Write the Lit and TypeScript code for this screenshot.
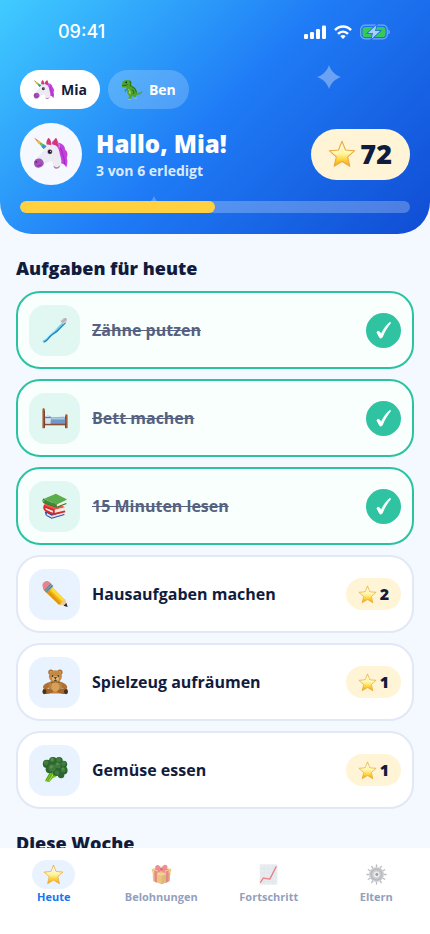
import { LitElement, html, css, svg, nothing } from "lit";
import { customElement, property, state } from "lit/decorators.js";
import { classMap } from "lit/directives/class-map.js";
import { styleMap } from "lit/directives/style-map.js";

const pictures = {
  unicorn: svg`
    <path d="M35 9c4-3 9-1 10 3 7 1 12 6 12 12 5 4 5 10 3 15 2 5 1 12-1 17-2-4-4-6-8-7l-12-8-8-22z" fill="#c63fdc"/>
    <path d="M43 15c6 5 9 10 9 17 4 6 4 12 4 18" fill="none" stroke="#9a2bbd" stroke-width="1.800"/>
    <path d="M38 8c6 2 9 7 9 13" fill="none" stroke="#e672ea" stroke-width="2.500"/>
    <path d="M24 17c7-4 15-3 19 2 4 5 4 12 6 18 1 5 3 9 0 14-3 6-11 7-13 2-1-4 0-7-3-8-5 0-8 3-13 4-3 4-9 9-14 7-5-2-5-10-2-14 5-7 13-10 20-25z" fill="#ecebf4"/>
    <path d="M4 42c5-3 10-3 13 1 2 3 3 6 1 9-3 4-9 6-13 3-4-3-4-9-1-13z" fill="#a350b8"/>
    <path d="M37 53c3 4 9 3 12-2-1 6-5 8-9 7-3-1-4-3-3-5z" fill="#b184a8"/>
    <path d="M24 15c-1-5 1-9 4-12 4 4 5 8 4 13zM36 15c0-6 2-10 5-12 3 4 4 9 2 14z" fill="#d33b70"/>
    <path d="m2 3 22 15-5 5z" fill="#5fc45c"/>
    <path d="m2 3 8 5.500-2 2z" fill="#f2786b"/><path d="m9 8 5 3-3 4-4-5z" fill="#f5b73c"/><path d="m19 14.500 5 3.500-5 5-4-4z" fill="#3d8fd6"/>
    <circle cx="30" cy="28" r="4.500" fill="#bb79c6"/><circle cx="30" cy="28" r="3.400" fill="#151923"/><circle cx="31" cy="27" r="1" fill="#fff"/>
    <circle cx="6" cy="46" r="1.600" fill="#5b226c"/><path d="M8 53c3 0 5-1 7-3" fill="none" stroke="#6d2f7c" stroke-width="1.500"/>`,
  dino: svg`
    <path d="M3 16C2 8 10 3 17 3c7-1 13 3 13 9 0 3-1 5-2 8 9 2 17 10 19 20 5 2 11-2 15-6 0 8-7 13-15 12l-4 4 2 5h-7l-3-7-4 3-2 8h-8l3-10c-5-5-7-11-6-18-2-2-3-4-3-7l-10 1c-3-1-3-6-2-9z" fill="#4fa22c"/>
    <path d="M20 28c-1 8 3 13 8 17 2-9-1-15-8-17z" fill="#a5cf55"/>
    <path d="M25 5c6 4 4 9 2 14 10 4 17 11 18 21M31 31c6 1 8 7 4 13" fill="none" stroke="#27731b" stroke-width="3"/>
    <path d="M4 19c5 0 10 0 15-3" stroke="#1e5e16" stroke-width="2.500" fill="none"/>
    <path d="m19 30-7 3 1 4M24 33l-4 4" fill="none" stroke="#3a8c23" stroke-width="3"/>
    <circle cx="15" cy="10" r="2.400" fill="#17210c"/><path d="M21 59h8M38 55h8" stroke="#d6dfa2" stroke-width="2"/>`,
  star: svg`
    <defs><linearGradient id="gold" x1="0" y1="0" x2="0" y2="1"><stop offset="0" stop-color="#fff0b8"/><stop offset=".5" stop-color="#fff6a2"/><stop offset=".72" stop-color="#ffd641"/><stop offset="1" stop-color="#f2a10f"/></linearGradient></defs>
    <path d="m32 3 8 20 21 1.500-16 14 5 21.500L32 49 14 60l5-21.500L3 24.500 24 23z" fill="url(#gold)" stroke="#eda844" stroke-width="2.400" stroke-linejoin="round"/>
    <path d="m32 11-5 15-13 2M32 11l5 15 13 2" fill="none" stroke="#fffbe3" stroke-width="2"/>`,
  toothbrush: svg`
    <path d="M5 60c6-1 8-9 15-15 8-7 14-8 20-16l16-17" fill="none" stroke="#78cfe9" stroke-width="7" stroke-linecap="round"/>
    <path d="M6 61c7-2 9-9 16-15 8-7 14-8 20-16l15-15" fill="none" stroke="#1b80bd" stroke-width="3" stroke-linecap="round"/>
    <path d="M8 54 18 43l14-12" fill="none" stroke="#d5f5fb" stroke-width="3"/>
    <path d="m45 9 9-7 7 2 1 6-10 8z" fill="#d4d0d2"/><path d="m47 12 12-9M50 14l11-9" stroke="#9a8e94" stroke-width="1.800"/>`,
  bed: svg`
    <path d="M6 42h52v8H6z" fill="#8d4e32"/>
    <path d="M1 11c0-4 6-4 6 0v46H1zM57 26c0-4 6-4 6 0v31h-6z" fill="#a45e3d"/>
    <path d="M6 14v42M58 28v28" stroke="#673422" stroke-width="2"/>
    <path d="M8 28c4-3 12-2 15 2l32-1c3 5 3 12 2 17H8z" fill="#7099c8"/>
    <path d="M8 29c5-4 12-2 14 3l-1 14H8z" fill="#d4e2ef"/><path d="M23 33h33" stroke="#abc9e6" stroke-width="5"/><path d="M8 31h13" stroke="#414f62" stroke-width="2"/>`,
  books: svg`
    <path d="m7 46 33-4 15 9-31 11-15-7z" fill="#304f9f"/><path d="m12 49 12 7 30-9v7l-30 8-13-6z" fill="#e3e4ee"/><path d="m11 55 13 7 31-9" fill="none" stroke="#304f9f" stroke-width="2.500"/>
    <path d="m5 26 30-2 22 11-28 7-20-7z" fill="#ef5548"/><path d="m9 34 19 9 29-8v10l-30 7-17-8z" fill="#f1e8e6"/><path d="M7 30c-3 6-1 11 3 14l18 8 29-7M8 34l21 8v10" fill="none" stroke="#d3292b" stroke-width="4.500"/>
    <path d="M5 14 34 2l28 14-26 13z" fill="#5aad4a"/><path d="m36 29 26-12-3 9-22 9z" fill="#f1f2e6"/><path d="M5 14c-4 4-3 8 0 10l31 11 24-9" fill="none" stroke="#28752d" stroke-width="2.500"/><path d="m5 15 31 14v6L5 24z" fill="#3a8a36"/>`,
  pencil: svg`
    <path d="m16 9 41 38-11 13L4 22z" fill="#f4b511"/><path d="m19 8 37 37-5 6-38-36z" fill="#ffd83a"/><path d="m6 24 36 35 5-4-36-37z" fill="#dd9a0c"/>
    <path d="M57 44l6 19-20-5z" fill="#edc897"/><path d="m60 54 3 10-10-3z" fill="#182d40"/>
    <path d="M2 19 18 2l10 11L13 30z" fill="#829cac"/><path d="M6 23 22 7M9 27 26 11" stroke="#465d6c" stroke-width="1.500"/>
    <path d="M3 17C-3 9 6-3 16 1l5 5L6 22z" fill="#e8838a"/>`,
  bear: svg`
    <circle cx="22" cy="8" r="6.500" fill="#a96d2f"/><circle cx="44" cy="8" r="6.500" fill="#a96d2f"/><circle cx="22" cy="8" r="3" fill="#dca75c"/><circle cx="44" cy="8" r="3" fill="#dca75c"/>
    <path d="M22 31C9 35 1 40 3 47c4 5 14 0 19-6zM43 31c11 3 20 8 19 16-3 5-14 0-20-6z" fill="#ae7131"/>
    <path d="M21 31c7-5 18-5 24 0 6 9 5 25-1 29H22c-7-5-7-22-1-29z" fill="#bd8140"/>
    <ellipse cx="33" cy="44" rx="10" ry="12" fill="#d6a157"/><ellipse cx="33" cy="18" rx="16" ry="15" fill="#c38a45"/><ellipse cx="33" cy="24" rx="8" ry="6" fill="#e5bd7c"/>
    <circle cx="26" cy="17" r="1.900" fill="#24170f"/><circle cx="40" cy="17" r="1.900" fill="#24170f"/><path d="M30 21h6l-3 3zM33 23v4m-4 0c3 3 5 2 8 0" fill="#38200f" stroke="#38200f" stroke-width="1.300"/>
    <path d="M3 49c6-4 20 0 25 6-4 7-22 9-25 3zM62 49c-6-4-20 0-25 6 4 7 22 9 25 3z" fill="#a36528"/><ellipse cx="6" cy="56" rx="5" ry="6" fill="#493019"/><ellipse cx="59" cy="56" rx="5" ry="6" fill="#493019"/><path d="M22 34c5-3 17-3 22 0" fill="none" stroke="#80501f" stroke-width="2"/>`,
  broccoli: svg`
    <path d="m20 35 20 5-6 9-8 3-8 10-11-3z" fill="#7fc52e"/><path d="m25 40-11 20M31 42 20 56M21 38 10 57" stroke="#4f961f" stroke-width="2"/><path d="M28 42 17 59" stroke="#b2e34b" stroke-width="2"/>
    <g fill="#2c6630"><circle cx="12" cy="17" r="10"/><circle cx="27" cy="10" r="10"/><circle cx="42" cy="9" r="9"/><circle cx="53" cy="18" r="9"/><circle cx="53" cy="33" r="10"/><circle cx="36" cy="37" r="10"/><circle cx="19" cy="30" r="10"/><circle cx="47" cy="44" r="8"/><circle cx="33" cy="22" r="14"/></g>
    <g fill="#417b3d"><circle cx="10" cy="14" r="6"/><circle cx="25" cy="7" r="6"/><circle cx="41" cy="7" r="6"/><circle cx="53" cy="16" r="6"/><circle cx="39" cy="20" r="7"/><circle cx="52" cy="32" r="6"/><circle cx="25" cy="27" r="9"/><circle cx="37" cy="39" r="6"/></g>
    <g fill="#5b8f4e"><circle cx="23" cy="24" r="4"/><circle cx="38" cy="17" r="3"/><circle cx="25" cy="6" r="3"/><circle cx="52" cy="29" r="3"/></g>`,
  gift: svg`
    <path d="m5 23 27 10v29L6 52zM59 23 32 33v29l25-10z" fill="#dca02e"/><path d="m32 33 27-10-2 29-25 10z" fill="#c98c22"/><path d="m2 15 30-8 30 8-1 10-29 11L3 25z" fill="#eebb47"/><path d="M3 18 32 28l29-10" fill="none" stroke="#c98622" stroke-width="2"/>
    <path d="m10 20 8 3v34l-7-3zM54 20l-8 3v34l7-3z" fill="#d73540"/><path d="m10 16 10-3 24 8-8 4zM54 16l-10-3-24 8 8 4z" fill="#d73540"/>
    <path d="M31 17C14 19 9 11 15 5s14 2 17 11C33 4 44-2 49 5s-3 13-17 12c9 2 14 6 12 13L31 20 18 28c-2-5 4-9 13-11z" fill="#ed3e53"/><circle cx="32" cy="16" r="4" fill="#a81a2b"/>`,
  chart: svg`
    <path d="M5 1h54v62H5z" fill="#d8e0e6"/><path d="M7 14h50M7 27h50M7 40h50M7 53h50M19 2v60M32 2v60M45 2v60" stroke="#c4ced8" stroke-width="1"/>
    <path d="m7 57 9-14 20 3L56 7" fill="none" stroke="#d92c34" stroke-width="4" stroke-linejoin="round"/>`,
  gear: svg`
    <g stroke="#8e9299" stroke-width="4" stroke-linecap="round"><path d="M32 3v58M3 32h58M17.500 7l29 50M46.500 7l-29 50M7 17.500l50 29M57 17.500 7 46.500"/></g>
    <circle cx="32" cy="32" r="23" fill="#b6b8bc"/><circle cx="32" cy="32" r="19" fill="#85898e"/><circle cx="32" cy="32" r="15" fill="#a6a9ae"/><circle cx="32" cy="32" r="9" fill="#e0e2e4"/><circle cx="33" cy="32" r="4.500" fill="#5e6267"/>`,
};

type PictureName = keyof typeof pictures;

@customElement("pic-icon")
class PicIcon extends LitElement {
  @property() name: PictureName = "star";
  static styles = css`
    :host { display: block; flex: none; }
    .picture { display: block; width: 100%; height: 100%; overflow: visible; }
  `;
  render() {
    return html`<svg class="picture" viewBox="0 0 64 64" aria-hidden="true">${pictures[this.name]}</svg>`;
  }
}

interface Task { title: string; icon: PictureName; stars: number; done: boolean; }
interface Child { name: string; icon: PictureName; }
interface Tab { label: string; icon: PictureName; }

const children: Child[] = [
  { name: "Mia", icon: "unicorn" },
  { name: "Ben", icon: "dino" },
];
const tabs: Tab[] = [
  { label: "Heute", icon: "star" },
  { label: "Belohnungen", icon: "gift" },
  { label: "Fortschritt", icon: "chart" },
  { label: "Eltern", icon: "gear" },
];

@customElement("app-root")
class AppRoot extends LitElement {
  @state() private child = 0;
  @state() private tab = 0;
  @state() private tasks: Task[] = [
    { title: "Zähne putzen", icon: "toothbrush", stars: 1, done: true },
    { title: "Bett machen", icon: "bed", stars: 1, done: true },
    { title: "15 Minuten lesen", icon: "books", stars: 2, done: true },
    { title: "Hausaufgaben machen", icon: "pencil", stars: 2, done: false },
    { title: "Spielzeug aufräumen", icon: "bear", stars: 1, done: false },
    { title: "Gemüse essen", icon: "broccoli", stars: 1, done: false },
  ];

  static styles = css`
    :host {
      display: flex; flex-direction: column; height: 100vh; overflow: hidden;
      background: #f4f8ff; color: #111c3d;
      font-family: "Open Sans", "Noto Sans", sans-serif;
    }
    * { box-sizing: border-box; }
    button { font: inherit; color: inherit; border: 0; background: none; padding: 0; margin: 0; cursor: pointer; }
    h1, h2, p { margin: 0; }

    .hero {
      position: relative; flex: none; padding: 0 20px 21px; overflow: hidden;
      border-radius: 0 0 32px 32px; color: #fff;
      background: linear-gradient(135deg, #40ccff 0%, #1f7bf6 50%, #104dd4 100%);
    }
    .sparkle { position: absolute; width: 24px; height: 24px; fill: #fff; opacity: 0.35; }
    .sparkle.high { top: 65px; right: 89px; }
    .sparkle.low { top: 196px; left: 34%; width: 16px; height: 16px; opacity: 0.25; }
    .status { display: flex; align-items: center; justify-content: space-between; height: 70px; padding: 0 20px 7px 38px; }
    .time { font: 500 18px/24px Inter, sans-serif; }
    .signals { display: flex; align-items: center; gap: 8px; }
    .signals svg { display: block; }
    .chips { display: flex; gap: 8px; }
    .chip {
      display: flex; align-items: center; gap: 6px; height: 39px; padding: 0 13px;
      border-radius: 20px; background: rgba(255, 255, 255, 0.2);
      font-size: 14px; line-height: 20px; font-weight: 700;
    }
    .chip.active { background: #fff; color: #111c3d; }
    .chip pic-icon { width: 22px; height: 22px; }
    .greeting { display: flex; align-items: center; gap: 14px; margin-top: 14px; }
    .avatar { display: grid; place-items: center; flex: none; width: 62px; height: 62px; border-radius: 50%; background: #f5f9ff; }
    .avatar pic-icon { width: 36px; height: 36px; }
    .who { flex: 1; min-width: 0; }
    h1 { font-size: 24px; line-height: 34px; font-weight: 800; }
    .sub { font-size: 14px; line-height: 20px; font-weight: 700; color: #dbe9ff; }
    .balance {
      display: flex; align-items: center; gap: 4px; height: 51px; padding: 0 18px 0 17px;
      border-radius: 26px; background: #fff4d6; color: #111c3d;
      font-size: 27px; line-height: 36px; font-weight: 800;
    }
    .balance pic-icon { width: 28px; height: 28px; }
    .track { position: relative; height: 12px; margin-top: 16px; border-radius: 6px; background: rgba(255, 255, 255, 0.25); overflow: hidden; }
    .fill { height: 100%; border-radius: 6px; background: #ffd040; }

    .content { flex: 1; min-height: 0; overflow: hidden; padding: 0 16px; }
    h2 { margin: 20px 0 9px; font-size: 18px; line-height: 28px; font-weight: 800; }
    .tasks { display: grid; gap: 10px; margin: 0; padding: 0; list-style: none; }
    .task {
      display: flex; align-items: center; gap: 12px; width: 100%; height: 78px; padding: 0 11px;
      border: 2px solid #e2e8f5; border-radius: 24px; background: #fff; text-align: left;
      font-size: 16px; line-height: 24px; font-weight: 700;
    }
    .task.done { border-color: #2ac3a0; background: #f8fffd; }
    .tile { display: grid; place-items: center; flex: none; width: 51px; height: 51px; border-radius: 16px; background: #e8f3ff; }
    .done .tile { background: #e1f8f2; }
    .tile pic-icon { width: 26px; height: 26px; }
    .title { flex: 1; min-width: 0; }
    .done .title { color: #56617f; text-decoration: line-through; }
    .tick { display: grid; place-items: center; width: 35px; height: 35px; border-radius: 50%; background: #2fc3a1; }
    .stars {
      display: flex; align-items: center; gap: 3px; height: 32px; padding: 0 12px;
      border-radius: 16px; background: #fff4d6; font-size: 16px; font-weight: 800;
    }
    .stars pic-icon { width: 19px; height: 19px; }

    .tabs { display: grid; grid-template-columns: repeat(4, 1fr); flex: none; padding: 12px 0 30px; background: #fff; }
    .tab {
      display: flex; flex-direction: column; align-items: center; color: #939fbe;
      font-size: 11px; line-height: 15px; font-weight: 700;
    }
    .bubble { display: grid; place-items: center; width: 43px; height: 29px; border-radius: 15px; }
    .bubble pic-icon { width: 21px; height: 21px; opacity: 0.6; }
    .tab.active { color: #1677ef; }
    .active .bubble { background: #e8f3ff; }
    .active .bubble pic-icon { opacity: 1; }
  `;

  private toggle(index: number) {
    this.tasks = this.tasks.map((t, i) => (i === index ? { ...t, done: !t.done } : t));
  }

  private renderSparkle(kind: string) {
    return html`<svg class="sparkle ${kind}" viewBox="0 0 24 24" aria-hidden="true"><path d="M12 0C14 6 18 10 24 12 18 14 14 18 12 24 10 18 6 14 0 12 6 10 10 6 12 0z"/></svg>`;
  }

  private renderStatus() {
    return html`<div class="status">
      <span class="time">09:41</span>
      <div class="signals">
        <svg width="22" height="14" viewBox="0 0 22 14" fill="#fff" aria-hidden="true">
          <rect x="0" y="9" width="4" height="5" rx="1.200"/><rect x="6" y="7" width="4" height="7" rx="1.200"/><rect x="12" y="4" width="4" height="10" rx="1.200"/><rect x="18" y="0.500" width="4" height="13.500" rx="1.200"/>
        </svg>
        <svg width="18" height="14" viewBox="0 0 18 14" fill="none" stroke="#fff" stroke-width="2.500" aria-hidden="true">
          <path d="M1 5.200C5.500.4 12.500.4 17 5.200M4 8.800c3-2.900 7-2.900 10 0"/><path d="M6.300 11.200c1.600-1.600 3.800-1.600 5.400 0L9 14z" fill="#fff" stroke="none"/>
        </svg>
        <svg width="30" height="16" viewBox="0 0 30 16" aria-hidden="true">
          <rect x=".7" y="1.200" width="26.600" height="13.600" rx="4.400" fill="none" stroke="#8fb6f8" stroke-opacity=".8" stroke-width="1.200"/>
          <path d="M28.500 5.700c1.600.5 1.600 4.100 0 4.600z" fill="#8fb6f8"/>
          <rect x="2.500" y="3" width="23" height="10" rx="2.800" fill="#35c85a"/>
          <path d="M16.500 1 8 9h5l-1.500 6L20 7h-5z" fill="#a9d0fb" stroke="#1c69ea" stroke-width="1.600" paint-order="stroke"/>
        </svg>
      </div>
    </div>`;
  }

  private renderTask(task: Task, index: number) {
    return html`<li>
      <button class=${classMap({ task: true, done: task.done })} aria-pressed=${task.done} @click=${() => this.toggle(index)}>
        <span class="tile"><pic-icon .name=${task.icon}></pic-icon></span>
        <span class="title">${task.title}</span>
        ${task.done
          ? html`<span class="tick"><svg width="15" height="17" viewBox="0 0 15 17" aria-hidden="true"><path d="M.8 10.300c1-1.400 2.400-1.300 3.200.2l1 2C7.400 7.700 10 3.500 13 .9c.8-.7 1.900-.5 1.500.3C11 5.500 8.200 10 6.300 15c-.5 1.300-2.200 1.600-2.700.4z" fill="#fff" stroke="#fff" stroke-width=".8" stroke-linejoin="round"/></svg></span>`
          : html`<span class="stars"><pic-icon .name=${"star"}></pic-icon>${task.stars}</span>`}
      </button>
    </li>`;
  }

  render() {
    const done = this.tasks.filter((t) => t.done).length;
    const total = this.tasks.length;
    const current = children[this.child];
    return html`
      <header class="hero">
        ${this.renderSparkle("high")}${this.renderSparkle("low")}
        ${this.renderStatus()}
        <div class="chips">
          ${children.map((c, i) => html`<button class=${classMap({ chip: true, active: i === this.child })} @click=${() => (this.child = i)}>
            <pic-icon .name=${c.icon}></pic-icon>${c.name}
          </button>`)}
        </div>
        <div class="greeting">
          <div class="avatar"><pic-icon .name=${current.icon}></pic-icon></div>
          <div class="who">
            <h1>Hallo, ${current.name}!</h1>
            <p class="sub">${done} von ${total} erledigt</p>
          </div>
          <div class="balance"><pic-icon .name=${"star"}></pic-icon>72</div>
        </div>
        <div class="track" role="progressbar" aria-label="Erledigte Aufgaben" aria-valuenow=${done} aria-valuemax=${total}>
          <div class="fill" style=${styleMap({ width: `${(done / total) * 100}%` })}></div>
        </div>
      </header>
      <main class="content">
        <h2>Aufgaben für heute</h2>
        <ul class="tasks">${this.tasks.map((t, i) => this.renderTask(t, i))}</ul>
        <h2>Diese Woche</h2>
      </main>
      <nav class="tabs">
        ${tabs.map((t, i) => html`<button class=${classMap({ tab: true, active: i === this.tab })} aria-current=${i === this.tab ? "page" : nothing} @click=${() => (this.tab = i)}>
          <span class="bubble"><pic-icon .name=${t.icon}></pic-icon></span>${t.label}
        </button>`)}
      </nav>`;
  }
}
